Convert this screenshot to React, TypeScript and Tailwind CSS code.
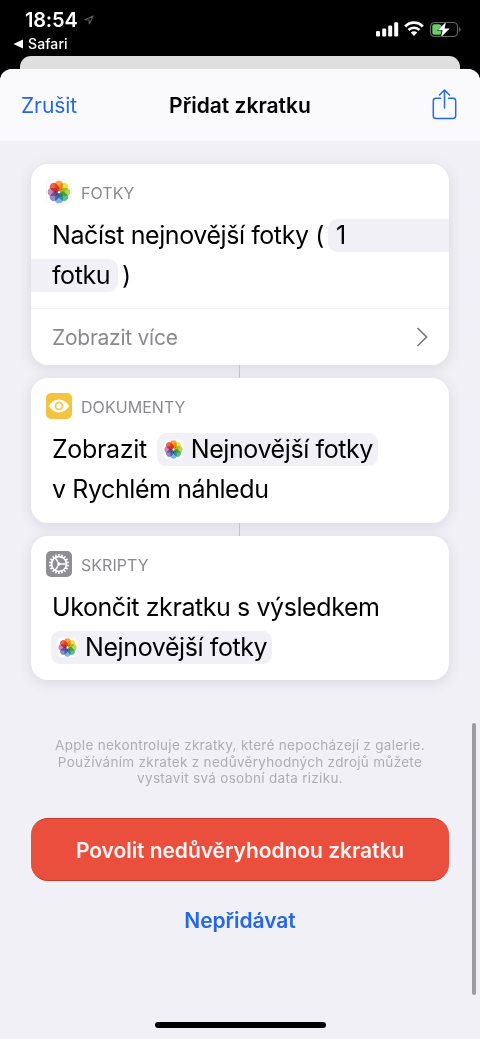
import type { ReactNode } from 'react';

const petals = [
  '#f8a03c',
  '#ece04a',
  '#b4d766',
  '#62bf90',
  '#78b4e6',
  '#928cc8',
  '#c68cc0',
  '#f0604f',
];

function PhotosIcon({ className }: { className: string }) {
  return (
    <svg viewBox="0 0 26 26" className={className}>
      <rect x="0.5" y="0.5" width="25" height="25" rx="6" fill="#fff" stroke="#f4f3f6" />
      <g style={{ isolation: 'isolate' }}>
        {petals.map((color, index) => (
          <rect
            key={color}
            x="9.1"
            y="1.7"
            width="7.8"
            height="10.2"
            rx="3.9"
            fill={color}
            transform={`rotate(${index * 45} 13 13)`}
            style={{ mixBlendMode: 'multiply' }}
          />
        ))}
      </g>
    </svg>
  );
}

function EyeIcon() {
  return (
    <svg viewBox="0 0 26 26" className="size-[26px]">
      <rect width="26" height="26" rx="5" fill="#f3c440" />
      <path d="M2.8 13C5.4 9 9 6.6 13 6.6S20.6 9 23.2 13C20.6 17 17 19.4 13 19.4S5.4 17 2.8 13Z" fill="#fff" />
      <circle cx="13" cy="13" r="3.5" fill="none" stroke="#f3c440" strokeWidth="1.7" />
    </svg>
  );
}

function GearIcon() {
  return (
    <svg viewBox="0 0 26 26" className="size-[26px]">
      <rect width="26" height="26" rx="5" fill="#8e8e93" />
      <g stroke="#fff" fill="none">
        <circle cx="13" cy="13" r="7.4" strokeWidth="1.7" />
        {Array.from({ length: 18 }, (_, index) => (
          <path key={index} d="M13 3V5.6" strokeWidth="1.6" transform={`rotate(${index * 20} 13 13)`} />
        ))}
        <path d="M13 13H20.2M13 13L9.4 6.76M13 13L9.4 19.24" strokeWidth="1.5" />
        <circle cx="13" cy="13" r="1.3" strokeWidth="1" />
      </g>
    </svg>
  );
}

function StatusBar() {
  return (
    <div className="flex h-14 justify-between text-white">
      <div className="pl-[13px] pt-2">
        <div className="flex items-center pl-3">
          <span className="text-[20px] font-semibold leading-6 tracking-[-0.2px]">18:54</span>
          <svg viewBox="0 0 10 10" className="ml-[6px] size-[10px]">
            <path d="M9 1L1 4.7L5 5L5.4 9Z" fill="none" stroke="#5c5c5c" strokeWidth="1.1" strokeLinejoin="round" />
          </svg>
        </div>
        <div className="mt-[3px] flex items-center">
          <svg viewBox="0 0 10 10" className="size-[10px]">
            <path d="M10 0.5V9.5L0.5 5Z" fill="#fff" />
          </svg>
          <span className="ml-[5px] text-[14px] font-medium leading-[18px] tracking-[0.1px]">Safari</span>
        </div>
      </div>
      <div className="flex items-start pr-[18px] pt-[21px]">
        <svg viewBox="0 0 24 16" className="h-4 w-6">
          <rect x="0" y="10" width="4" height="5.5" rx="1.2" fill="#fff" />
          <rect x="6.2" y="7.5" width="4" height="8" rx="1.2" fill="#fff" />
          <rect x="12.2" y="4.5" width="4" height="11" rx="1.2" fill="#fff" />
          <rect x="18.2" y="1.2" width="4" height="14.3" rx="1.2" fill="#fff" />
        </svg>
        <svg viewBox="0 0 20 15" className="ml-[4px] h-[15px] w-5">
          <path d="M1.2 5.5C6 0.4 14 0.4 18.8 5.5" fill="none" stroke="#fff" strokeWidth="2.8" />
          <path d="M4.5 9C7.6 5.9 12.4 5.9 15.5 9" fill="none" stroke="#fff" strokeWidth="2.6" />
          <path d="M6.8 11.6C8.6 9.9 11.4 9.9 13.2 11.6L10 14.9Z" fill="#fff" />
        </svg>
        <svg viewBox="0 0 33 17" className="ml-[5px] h-[17px] w-[33px]">
          <rect x="1.5" y="1.5" width="27" height="14" rx="4" fill="none" stroke="#666" strokeWidth="1.2" />
          <path d="M30.2 6.2C32 6.8 32 10.2 30.2 10.8Z" fill="#777" />
          <rect x="3.3" y="3.3" width="9" height="10.4" rx="2" fill="#67ce67" />
          <path d="M17 1L8.6 9.3H13.6L12 16L20.8 7.4H15.6Z" fill="#fff" stroke="#000" strokeWidth="1" paintOrder="stroke" strokeLinejoin="round" />
        </svg>
      </div>
    </div>
  );
}

function Card({ icon, label, children }: { icon: ReactNode; label: string; children: ReactNode }) {
  return (
    <section className="overflow-hidden rounded-[17px] bg-white shadow-[0_3px_14px_rgba(60,60,90,0.13)]">
      <div className="flex h-[52px] items-center pl-[15px] pt-1">
        {icon}
        <span className="ml-[9px] pt-px text-[16px] leading-5 tracking-[0.05px] text-[#8a8a8e]">{label}</span>
      </div>
      {children}
    </section>
  );
}

function Connector() {
  return <div className="ml-[208px] h-[13px] w-px bg-[#c6c5cb]" />;
}

function PhotoToken() {
  return (
    <span className="flex h-[33px] items-center rounded-[9px] bg-[#f1f0f6] pl-[6px] pr-[5px]">
      <PhotosIcon className="size-[21px]" />
      <span className="ml-[7px] pt-px tracking-[-0.4px]">Nejnovější fotky</span>
    </span>
  );
}

export default function App() {
  return (
    <div className="flex h-[1039px] w-[480px] flex-col overflow-hidden bg-black font-[Inter,'Liberation_Sans',sans-serif] text-black">
      <StatusBar />
      <div className="mx-5 h-[13px] rounded-t-[11px] bg-[#dfdfdf]" />

      <div className="relative flex-1 overflow-hidden rounded-t-[12px] bg-[#f1f0f6]">
        <header className="grid h-[72px] grid-cols-[1fr_auto_1fr] items-center bg-[#fafafc] px-[21px]">
          <button className="pt-px text-left text-[21px] tracking-[-0.1px] text-[#2468e6]">Zrušit</button>
          <h1 className="pt-px text-[21px] font-semibold">Přidat zkratku</h1>
          <svg viewBox="0 0 26 32" className="mr-px h-8 w-[26px] justify-self-end" fill="none" stroke="#2468e6" strokeWidth="1.5" strokeLinecap="round" strokeLinejoin="round">
            <path d="M8.5 9.2H4Q1.3 9.2 1.3 11.900V26.700Q1.3 29.400 4 29.400H21Q23.700 29.400 23.700 26.700V11.900Q23.700 9.200 21 9.200H16.500" />
            <path d="M12.5 19V1L7.500 6M12.500 1L17.500 6" />
          </svg>
        </header>

        <main className="px-[31px] pt-[23px]">
          <Card icon={<PhotosIcon className="size-[26px]" />} label="FOTKY">
            <div className="whitespace-nowrap text-[25px] tracking-[-0.42px]">
              <div className="flex h-[39px] items-center pl-[21px]">
                <span className="pt-px">Načíst nejnovější fotky (</span>
                <span className="ml-[4px] flex h-[33px] flex-1 items-center rounded-l-[9px] bg-[#f1f0f6] pl-2 pt-px">1</span>
              </div>
              <div className="flex h-10 items-center">
                <span className="flex h-[33px] items-center rounded-r-[9px] bg-[#f1f0f6] pl-[21px] pr-2 pt-px">fotku</span>
                <span className="ml-[4px] pt-px">)</span>
              </div>
            </div>
            <div className="mt-[13px] flex h-[57px] items-center justify-between border-t border-[#f0eff3] pl-[21px] pr-[21px]">
              <span className="pt-px text-[21px] tracking-[-0.25px] text-[#8a8a8e]">Zobrazit více</span>
              <svg viewBox="0 0 12 20" className="h-5 w-3" fill="none" stroke="#78787c" strokeWidth="1.6">
                <path d="M1.5 1L10.5 10L1.5 19" />
              </svg>
            </div>
          </Card>
          <Connector />
          <Card icon={<EyeIcon />} label="DOKUMENTY">
            <div className="h-[93px] whitespace-nowrap pl-[21px] text-[25px] tracking-[-0.42px]">
              <div className="flex h-[39px] items-center">
                <span className="mr-[10px] pt-px tracking-[-0.35px]">Zobrazit</span>
                <PhotoToken />
              </div>
              <div className="flex h-10 items-center pt-px">v Rychlém náhledu</div>
            </div>
          </Card>
          <Connector />
          <Card icon={<GearIcon />} label="SKRIPTY">
            <div className="h-[92px] whitespace-nowrap pl-[21px] text-[25px] tracking-[-0.42px]">
              <div className="flex h-[39px] items-center">Ukončit zkratku s výsledkem</div>
              <div className="-ml-px flex h-10 items-center">
                <PhotoToken />
              </div>
            </div>
          </Card>

          <p className="mt-[57px] whitespace-nowrap text-center text-[13.5px] leading-[16.6px] tracking-[0.3px] text-[#aeaeb2]">
            Apple nekontroluje zkratky, které nepocházejí z galerie.
            <br />
            Používáním zkratek z nedůvěryhodných zdrojů můžete
            <br />
            vystavit svá osobní data riziku.
          </p>

          <button className="mt-[31px] h-[63px] w-full whitespace-nowrap rounded-[17px] border-y border-[#c9362b] bg-[#ea4e3d] pt-[2px] text-[21px] font-semibold tracking-[-0.05px] text-[#fff4f2]">
            Povolit nedůvěryhodnou zkratku
          </button>
          <button className="mt-6 h-8 w-full text-[21px] font-semibold tracking-[-0.05px] text-[#2468e6]">Nepřidávat</button>
        </main>

        <div className="absolute right-1 top-[654px] h-[272px] w-1 rounded-full bg-[#9c9ca1]" />
        <div className="absolute bottom-[11px] left-[155px] h-[6px] w-[171px] rounded-full bg-black" />
      </div>
    </div>
  );
}
